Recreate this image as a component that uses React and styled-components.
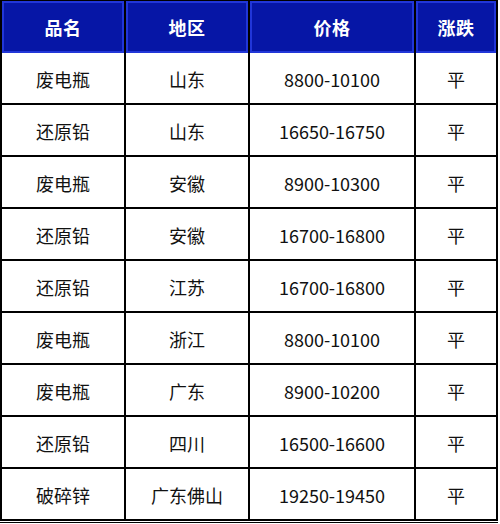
import React from "react";
import styled, { createGlobalStyle } from "styled-components";

const Global = createGlobalStyle`
  html, body { margin: 0; padding: 0; background: #fff; }
  body { font-family: "Noto Sans CJK SC", "Noto Sans", sans-serif; }
`;

const Frame = styled.div`
  width: 498px;
  padding-bottom: 1px;
  border-bottom: 1px solid #000;
`;

const Grid = styled.div`
  display: grid;
  grid-template-columns: 124px 124px 166px 82px;
  grid-template-rows: 52px repeat(9, 52px);
  border-left: 2px solid #000;
  border-top: 1px solid #000;
`;

const HeadCell = styled.div`
  display: flex;
  align-items: center;
  justify-content: center;
  background: #0616a6;
  box-shadow: inset 0 0 0 2px #2136d8;
  border-right: 2px solid #000;
  color: #fff;
  font-size: 18px;
  font-weight: 700;
  letter-spacing: 0.5px;
`;

const Cell = styled.div`
  display: flex;
  align-items: center;
  justify-content: center;
  background: #fff;
  border-right: 2px solid #000;
  border-bottom: 2px solid #000;
  color: #111;
  font-size: 18px;
  padding-top: 2px;
`;

const headers = ["品名", "地区", "价格", "涨跌"];
const rows = [
  ["废电瓶", "山东", "8800-10100", "平"],
  ["还原铅", "山东", "16650-16750", "平"],
  ["废电瓶", "安徽", "8900-10300", "平"],
  ["还原铅", "安徽", "16700-16800", "平"],
  ["还原铅", "江苏", "16700-16800", "平"],
  ["废电瓶", "浙江", "8800-10100", "平"],
  ["废电瓶", "广东", "8900-10200", "平"],
  ["还原铅", "四川", "16500-16600", "平"],
  ["破碎锌", "广东佛山", "19250-19450", "平"],
];

export default function App() {
  return (
    <>
      <Global />
      <Frame>
        <Grid>
          {headers.map((h) => (
            <HeadCell key={h}>{h}</HeadCell>
          ))}
          {rows.map((r, i) =>
            r.map((c, j) => <Cell key={i + "-" + j}>{c}</Cell>)
          )}
        </Grid>
      </Frame>
    </>
  );
}
